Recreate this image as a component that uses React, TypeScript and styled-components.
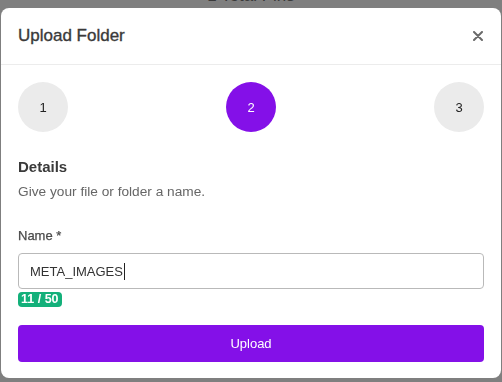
import React from "react";
import styled, { createGlobalStyle } from "styled-components";

const Global = createGlobalStyle`
  html, body { margin: 0; padding: 0; background: #ffffff; }
  body { font-family: "Liberation Sans", Arial, sans-serif; height: 382px; overflow: hidden; }
  * { box-sizing: border-box; }
`;

const Page = styled.div`
  display: flex;
  justify-content: center;
`;

const PageTitle = styled.div`
  margin-top: -13px;
  font-size: 17px;
  line-height: 17px;
  color: #747474;
`;

const Overlay = styled.div`
  position: fixed;
  inset: 0;
  background: rgba(0, 0, 0, 0.5);
  display: flex;
  justify-content: center;
  padding-top: 8px;
`;

const Modal = styled.div`
  width: 500px;
  height: 370px;
  background: #ffffff;
  border-radius: 8px;
  display: flex;
  flex-direction: column;
`;

const Header = styled.div`
  height: 57px;
  display: flex;
  align-items: center;
  justify-content: space-between;
  padding: 0 18px 0 17px;
  border-bottom: 1px solid #ececec;
`;

const Title = styled.h2`
  margin: 0;
  font-size: 17px;
  font-weight: 400;
  -webkit-text-stroke: 0.35px #3a3a3a;
  color: #3a3a3a;
`;

const Close = styled.button`
  border: none;
  background: none;
  padding: 0;
  width: 10px;
  height: 10px;
  display: flex;
  align-items: center;
  justify-content: center;
  cursor: pointer;
`;

const Body = styled.div`
  padding: 17px 17px 0 17px;
  display: flex;
  flex-direction: column;
`;

const Steps = styled.div`
  display: flex;
  justify-content: space-between;
`;

const Step = styled.div<{ $active?: boolean }>`
  width: 50px;
  height: 50px;
  border-radius: 50%;
  display: flex;
  align-items: center;
  justify-content: center;
  font-size: 13px;
  background: ${(p) => (p.$active ? "#8410e8" : "#ebebeb")};
  color: ${(p) => (p.$active ? "#ffffff" : "#222222")};
`;

const SectionTitle = styled.h3`
  margin: 26px 0 0 0;
  font-size: 15px;
  line-height: 18px;
  font-weight: 600;
  color: #3a3a3a;
`;

const Help = styled.p`
  margin: 8px 0 0 0;
  font-size: 13.7px;
  line-height: 16px;
  color: #666666;
`;

const Label = styled.label`
  margin-top: 28px;
  font-size: 13px;
  line-height: 16px;
  font-weight: 400;
  -webkit-text-stroke: 0.25px #4a4a4a;
  color: #4a4a4a;
`;

const InputBox = styled.div`
  margin-top: 9px;
  height: 36px;
  border: 1px solid #b9b9b9;
  border-radius: 4px;
  display: flex;
  align-items: center;
  padding: 0 11px;
  font-size: 13px;
  color: #333333;
`;

const Caret = styled.span`
  display: inline-block;
  width: 1px;
  height: 17px;
  background: #222;
  margin-left: 1px;
`;

const Counter = styled.span`
  align-self: flex-start;
  margin-top: 3px;
  height: 15px;
  padding: 0 3px;
  border-radius: 4px;
  background: #13b07a;
  color: #ffffff;
  font-size: 12.5px;
  font-weight: 700;
  line-height: 15px;
`;

const Button = styled.button`
  margin-top: 18px;
  height: 37px;
  border: none;
  border-radius: 4px;
  background: #8410e8;
  color: #ffffff;
  font-family: inherit;
  font-size: 13px;
  cursor: pointer;
`;

export default function App() {
  return (
    <>
      <Global />
      <Page>
        <PageTitle>1 Total Pins</PageTitle>
      </Page>
      <Overlay>
        <Modal>
          <Header>
            <Title>Upload Folder</Title>
            <Close aria-label="Close">
              <svg width="10" height="10" viewBox="0 0 10 10">
                <path d="M1 1 L9 9 M9 1 L1 9" stroke="#6a6a6a" strokeWidth="2" strokeLinecap="round" />
              </svg>
            </Close>
          </Header>
          <Body>
            <Steps>
              <Step>1</Step>
              <Step $active>2</Step>
              <Step>3</Step>
            </Steps>
            <SectionTitle>Details</SectionTitle>
            <Help>Give your file or folder a name.</Help>
            <Label>Name *</Label>
            <InputBox>
              META_IMAGES
              <Caret />
            </InputBox>
            <Counter>11 / 50</Counter>
            <Button>Upload</Button>
          </Body>
        </Modal>
      </Overlay>
    </>
  );
}
